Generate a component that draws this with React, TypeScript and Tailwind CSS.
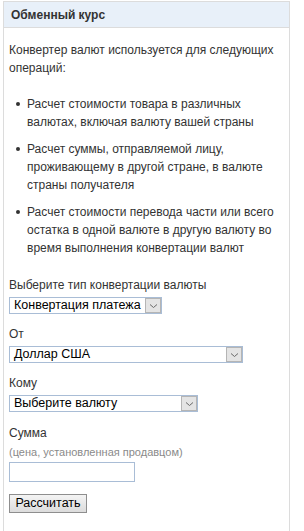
import React from "react";

function Chevron() {
  return (
    <div className="flex h-full w-[16px] items-center justify-center border border-[#b5b5b5] bg-[#e4e4e4]">
      <svg width="9" height="6" viewBox="0 0 9 6" fill="none">
        <path d="M1 1.5 L4.5 4.5 L8 1.5" stroke="#6a6a6a" strokeWidth="1" />
      </svg>
    </div>
  );
}

function FakeSelect({ text, width }: { text: string; width: string }) {
  return (
    <div className={`flex h-[17px] items-stretch border border-[#a9bdd6] bg-white ${width}`}>
      <div className="flex flex-1 items-center pl-[4px] text-[12.5px] leading-none text-black">{text}</div>
      <Chevron />
    </div>
  );
}

const bullets = [
  "Расчет стоимости товара в различных валютах, включая валюту вашей страны",
  "Расчет суммы, отправляемой лицу, проживающему в другой стране, в валюте страны получателя",
  "Расчет стоимости перевода части или всего остатка в одной валюте в другую валюту во время выполнения конвертации валют",
];

export default function App() {
  return (
    <div className="h-[531px] w-[304px] overflow-hidden bg-white font-['Liberation_Sans',Arial,sans-serif] text-[#333]">
      <div className="ml-[3px] mt-[1px] h-[600px] w-[287px] border border-b-0 border-[#dcdcdc]">
        <div className="flex h-[26px] items-center border-b border-[#dcdcdc] bg-[#e8f0f9] pl-[7px] text-[12px] font-bold text-[#333]">
          Обменный курс
        </div>
        <div className="px-[5px]">
          <p className="mt-[13px] text-[12px] leading-[18px]">
            Конвертер валют используется для следующих операций:
          </p>
          <ul className="mt-[18px] flex flex-col gap-[9px]">
            {bullets.map((b) => (
              <li key={b} className="flex text-[12px] leading-[18px]">
                <span className="flex h-[18px] w-[18px] shrink-0 items-center justify-center">
                  <span className="block h-[4px] w-[4px] rounded-full bg-[#333]" />
                </span>
                <span className="pr-[4px]">{b}</span>
              </li>
            ))}
          </ul>
          <div className="mt-[20px] text-[12px] leading-[16px]">Выберите тип конвертации валюты</div>
          <div className="mt-[4px]">
            <FakeSelect text="Конвертация платежа" width="w-[153px]" />
          </div>
          <div className="mt-[12px] text-[12px] leading-[16px]">От</div>
          <div className="mt-[4px]">
            <FakeSelect text="Доллар США" width="w-[234px]" />
          </div>
          <div className="mt-[12px] text-[12px] leading-[16px]">Кому</div>
          <div className="mt-[4px]">
            <FakeSelect text="Выберите валюту" width="w-[189px]" />
          </div>
          <div className="mt-[13px] text-[12px] leading-[16px]">Сумма</div>
          <div className="mt-[3px] text-[11px] leading-[16px] text-[#8a8a8a]">
            (цена, установленная продавцом)
          </div>
          <div className="mt-[2px] h-[20px] w-[126px] border border-[#a9bdd6] bg-white" />
          <button className="mt-[12px] flex h-[19px] w-[78px] items-center justify-center border border-[#8e8e8e] bg-gradient-to-b from-[#f4f4f4] to-[#dcdcdc] text-[12.5px] leading-none text-black">
            Рассчитать
          </button>
        </div>
      </div>
    </div>
  );
}
